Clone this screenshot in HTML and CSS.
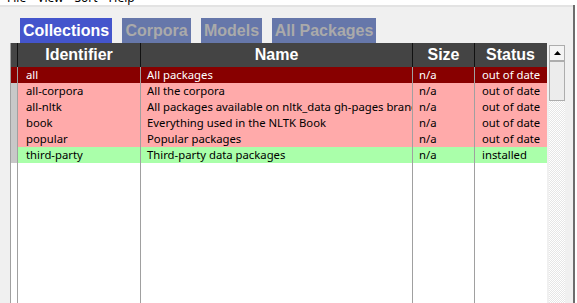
FILE: index.html
```html
<!DOCTYPE html>
<html lang="en">
<head>
    <meta charset="UTF-8">
    <title>NLTK Downloader</title>
    <link rel="stylesheet" href="styles.css">
</head>
<body>
    <div class="menubar">
        <span>File</span>
        <span>View</span>
        <span>Sort</span>
        <span>Help</span>
    </div>

    <div class="frame">
        <div class="panel">
            <div class="tabs">
                <div class="tab active tab-collections">Collections</div>
                <div class="tab tab-corpora">Corpora</div>
                <div class="tab tab-models">Models</div>
                <div class="tab tab-all">All Packages</div>
            </div>

            <div class="listing">
                <div class="table">
                    <div class="row head">
                        <div class="cell mark"></div>
                        <div class="cell id">Identifier</div>
                        <div class="cell name">Name</div>
                        <div class="cell size">Size</div>
                        <div class="cell status">Status</div>
                    </div>
                    <div class="row selected">
                        <div class="cell mark"></div>
                        <div class="cell id">all</div>
                        <div class="cell name">All packages</div>
                        <div class="cell size">n/a</div>
                        <div class="cell status">out of date</div>
                    </div>
                    <div class="row stale">
                        <div class="cell mark"></div>
                        <div class="cell id">all-corpora</div>
                        <div class="cell name">All the corpora</div>
                        <div class="cell size">n/a</div>
                        <div class="cell status">out of date</div>
                    </div>
                    <div class="row stale">
                        <div class="cell mark"></div>
                        <div class="cell id">all-nltk</div>
                        <div class="cell name">All packages available on nltk_data gh-pages branch</div>
                        <div class="cell size">n/a</div>
                        <div class="cell status">out of date</div>
                    </div>
                    <div class="row stale">
                        <div class="cell mark"></div>
                        <div class="cell id">book</div>
                        <div class="cell name">Everything used in the NLTK Book</div>
                        <div class="cell size">n/a</div>
                        <div class="cell status">out of date</div>
                    </div>
                    <div class="row stale">
                        <div class="cell mark"></div>
                        <div class="cell id">popular</div>
                        <div class="cell name">Popular packages</div>
                        <div class="cell size">n/a</div>
                        <div class="cell status">out of date</div>
                    </div>
                    <div class="row installed">
                        <div class="cell mark"></div>
                        <div class="cell id">third-party</div>
                        <div class="cell name">Third-party data packages</div>
                        <div class="cell size">n/a</div>
                        <div class="cell status">installed</div>
                    </div>
                    <div class="row filler">
                        <div class="cell mark"></div>
                        <div class="cell id"></div>
                        <div class="cell name"></div>
                        <div class="cell size"></div>
                        <div class="cell status"></div>
                    </div>
                </div>

                <div class="scrollbar">
                    <div class="sb-button">
                        <svg width="7" height="4" viewBox="0 0 7 4"><polygon points="0,4 3.5,0 7,4" fill="#000"/></svg>
                    </div>
                    <div class="sb-thumb"></div>
                    <div class="sb-trough"></div>
                </div>
            </div>
        </div>
        <div class="edge"></div>
    </div>
</body>
</html>
```

FILE: styles.css
```css
html, body {
    margin: 0;
    padding: 0;
}

body {
    width: 577px;
    height: 303px;
    overflow: hidden;
    background-color: #fff;
    font-family: "Noto Sans", "Open Sans", sans-serif;
    display: flex;
    flex-direction: column;
}

.menubar {
    height: 5px;
    overflow: hidden;
    background-color: #fff;
    display: flex;
    gap: 11px;
    padding-left: 7px;
    font-size: 12px;
    line-height: 12px;
    color: #000;
}

.menubar span {
    margin-top: -8px;
}

.frame {
    flex: 1;
    display: flex;
    padding-right: 2px;
    min-height: 0;
}

.panel {
    width: 573px;
    background-color: #f0f0f0;
    border-top: 2px solid #e3e3e3;
    box-sizing: border-box;
    padding: 11px 0 0 10px;
    display: flex;
    flex-direction: column;
    min-height: 0;
}

.edge {
    width: 2px;
    background-color: #6d6d6d;
}

/* tabs */
.tabs {
    display: flex;
    gap: 10px;
    margin-left: 10px;
    height: 25px;
}

.tab {
    font-family: "Liberation Sans", Arial, sans-serif;
    font-weight: bold;
    font-size: 16px;
    line-height: 25px;
    text-align: center;
    background-color: #6677aa;
    color: #aaaaaa;
}

.tab.active {
    background-color: #4455cc;
    color: #fff;
}

.tab-collections { width: 92px; }
.tab-corpora { width: 69px; }
.tab-models { width: 61px; }
.tab-all { width: 104px; }

/* table */
.listing {
    flex: 1;
    display: flex;
    min-height: 0;
}

.table {
    width: 536px;
    background-color: #fff;
    border-left: 1px solid #a0a0a0;
    display: flex;
    flex-direction: column;
}

.row {
    display: flex;
    height: 16px;
    font-size: 11.3px;
    line-height: 16px;
    color: #000;
}

.cell {
    box-sizing: border-box;
    border-right: 1px solid #a0a0a0;
    white-space: nowrap;
    overflow: hidden;
    padding-left: 6px;
}

.cell.mark { width: 7px; padding: 0; }
.cell.id { width: 123px; padding-left: 8px; }
.cell.name { width: 272px; }
.cell.size { width: 62px; }
.cell.status { width: 71px; padding-left: 7px; border-right: none; }

.row.head {
    height: 24px;
    background-color: #444;
    color: #fff;
    font-family: "Liberation Sans", Arial, sans-serif;
    font-weight: bold;
    font-size: 16px;
    line-height: 24px;
}

.row.head .cell {
    text-align: center;
    padding: 0;
    border-right-color: #111;
}

.row.stale { background-color: #ffaaaa; }
.row.installed { background-color: #aaffaa; }
.row.stale .mark, .row.installed .mark { background-color: #c8c8c8; }

.row.selected {
    background-color: #880000;
    color: #fff;
}

.row.filler {
    flex: 1;
    background-color: #fff;
}

/* scrollbar */
.scrollbar {
    width: 16px;
    margin-left: 2px;
    margin-top: 2px;
    display: flex;
    flex-direction: column;
}

.sb-button {
    height: 16px;
    box-sizing: border-box;
    border: 1px solid #adadad;
    background-color: #f4f4f4;
    display: flex;
    align-items: center;
    justify-content: center;
}

.sb-thumb {
    height: 40px;
    box-sizing: border-box;
    border: 1px solid #adadad;
    background-color: #ececec;
}

.sb-trough {
    flex: 1;
    background-color: #f6f6f6;
    background-image: repeating-conic-gradient(#e6e6e6 0 25%, #fff 0 50%);
    background-size: 2px 2px;
}
```
